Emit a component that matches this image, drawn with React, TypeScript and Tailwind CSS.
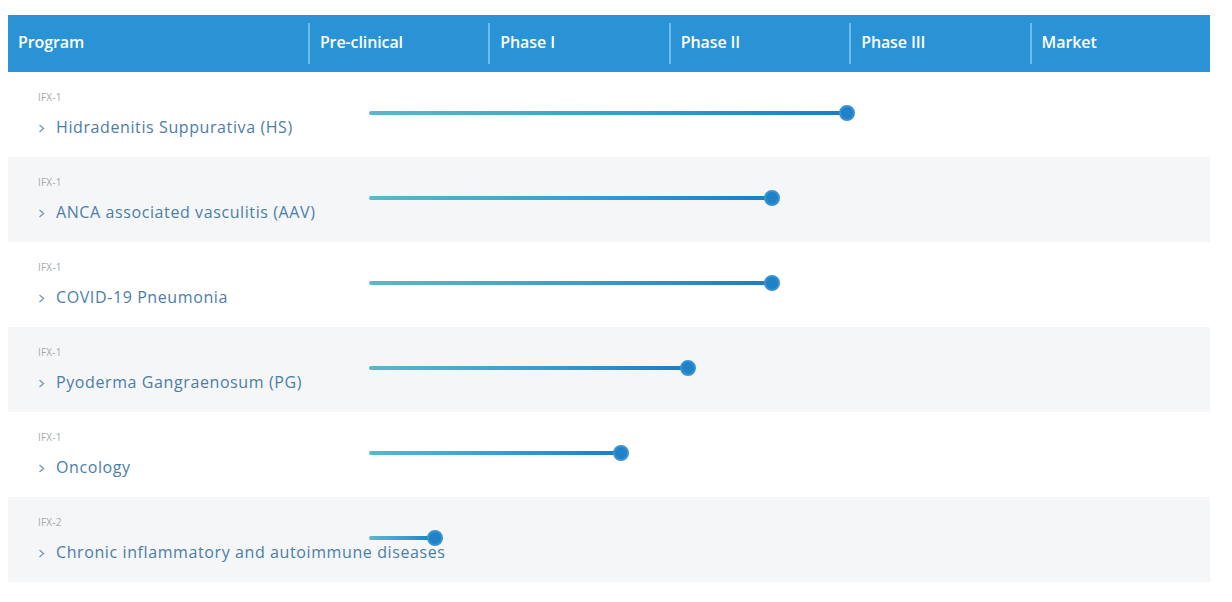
import React from "react";

const phases = ["Pre-clinical", "Phase I", "Phase II", "Phase III", "Market"];

const programs = [
  { code: "IFX-1", name: "Hidradenitis Suppurativa (HS)", end: 847 },
  { code: "IFX-1", name: "ANCA associated vasculitis (AAV)", end: 772 },
  { code: "IFX-1", name: "COVID-19 Pneumonia", end: 772 },
  { code: "IFX-1", name: "Pyoderma Gangraenosum (PG)", end: 688 },
  { code: "IFX-1", name: "Oncology", end: 621 },
  { code: "IFX-2", name: "Chronic inflammatory and autoimmune diseases", end: 435 },
];

// bars start at x=369 on the page
const BAR_START = 369;

export default function App() {
  return (
    <div className="h-[602px] w-[1232px] bg-white pt-[15px] pl-2" style={{ fontFamily: '"Open Sans", sans-serif' }}>
      <div className="w-[1202px]">
        <div className="flex h-[57px] items-center bg-[#2a93d5] text-[16px] font-semibold tracking-[-0.1px] text-white">
          <div className="w-[300px] pb-[3px] pl-[10px]">Program</div>
          {phases.map((p) => (
            <div key={p} className="flex h-[41px] w-[180.5px] items-center border-l-2 border-[#6cbdea] pb-[3px] pl-[10px]">
              {p}
            </div>
          ))}
        </div>

        {programs.map((row, i) => (
          <div key={row.name} className={`relative flex h-[85px] ${i % 2 === 1 ? "bg-[#f5f6f8]" : "bg-white"}`}>
            <div className="flex w-[300px] shrink-0 flex-col pl-[30px] pt-[16px]">
              <span className="text-[10px] leading-[18px] tracking-[0.2px] text-[#a3a8ad]">{row.code}</span>
              <span className="mt-[8px] flex items-center whitespace-nowrap text-[16px] leading-[26px] tracking-[0.6px] text-[#4b7ea7]">
                <svg width="7" height="9" viewBox="0 0 7 9" className="mr-[11px] mt-[2px] shrink-0">
                  <polyline points="1.5,1 5.5,4.5 1.5,8" fill="none" stroke="#7d9bb3" strokeWidth="1.4" />
                </svg>
                {row.name}
              </span>
            </div>
            <div className="flex flex-1 pt-[33px] pl-[61px]">
              <div className="relative h-[16px]" style={{ width: row.end - BAR_START + 8 }}>
                <div className="absolute left-0 right-[6px] top-[6px] h-[4px] rounded-full bg-gradient-to-r from-[#5ab8c9] via-[#3a9fd0] to-[#1b7cc4]" />
                <div className="absolute right-0 top-0 h-[16px] w-[16px] rounded-full border-2 border-[#3a92d0] bg-[#1f82c8]" />
              </div>
            </div>
          </div>
        ))}
      </div>
    </div>
  );
}
